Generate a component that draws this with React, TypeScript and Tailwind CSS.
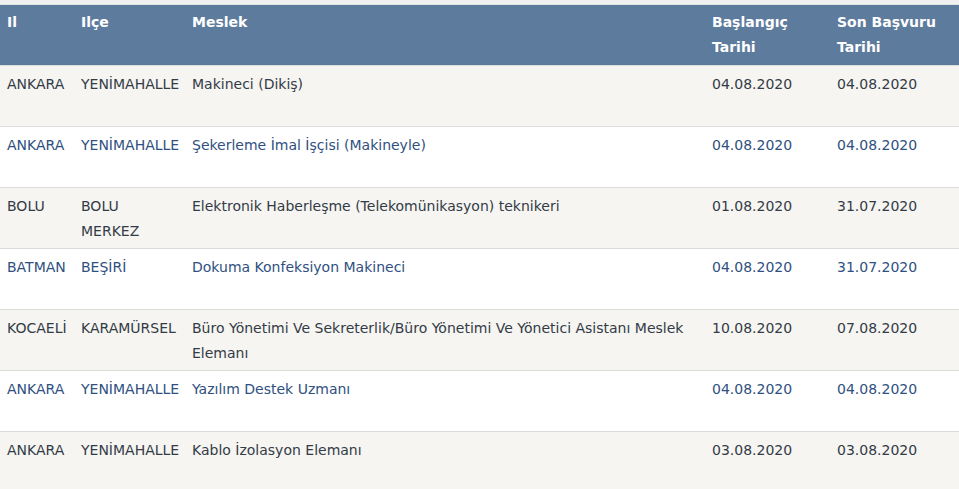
import React from "react";

type Row = {
  il: string;
  ilce: string[];
  meslek: string[];
  baslangic: string;
  son: string;
};

const rows: Row[] = [
  { il: "ANKARA", ilce: ["YENİMAHALLE"], meslek: ["Makineci (Dikiş)"], baslangic: "04.08.2020", son: "04.08.2020" },
  { il: "ANKARA", ilce: ["YENİMAHALLE"], meslek: ["Şekerleme İmal İşçisi (Makineyle)"], baslangic: "04.08.2020", son: "04.08.2020" },
  { il: "BOLU", ilce: ["BOLU", "MERKEZ"], meslek: ["Elektronik Haberleşme (Telekomünikasyon) teknikeri"], baslangic: "01.08.2020", son: "31.07.2020" },
  { il: "BATMAN", ilce: ["BEŞİRİ"], meslek: ["Dokuma Konfeksiyon Makineci"], baslangic: "04.08.2020", son: "31.07.2020" },
  {
    il: "KOCAELİ",
    ilce: ["KARAMÜRSEL"],
    meslek: ["Büro Yönetimi Ve Sekreterlik/Büro Yönetimi Ve Yönetici Asistanı Meslek", "Elemanı"],
    baslangic: "10.08.2020",
    son: "07.08.2020",
  },
  { il: "ANKARA", ilce: ["YENİMAHALLE"], meslek: ["Yazılım Destek Uzmanı"], baslangic: "04.08.2020", son: "04.08.2020" },
  { il: "ANKARA", ilce: ["YENİMAHALLE"], meslek: ["Kablo İzolasyon Elemanı"], baslangic: "03.08.2020", son: "03.08.2020" },
];

const Lines = ({ lines }: { lines: string[] }) => (
  <>
    {lines.map((l, i) => (
      <span key={i} className="block whitespace-nowrap">
        {l}
      </span>
    ))}
  </>
);

export default function App() {
  return (
    <div
      className="w-[959px] h-[489px] overflow-hidden bg-white"
      style={{ fontFamily: "'DejaVu Sans', Verdana, sans-serif" }}
    >
      {/* faint page background strip above the table */}
      <div className="h-[4px] bg-[#f1f1f1] border-b border-[#e2e2e2] box-content" />
      <table className="table-fixed border-collapse w-[980px] text-[14px] leading-[25px]">
        <colgroup>
          <col className="w-[74px]" />
          <col className="w-[111px]" />
          <col className="w-[520px]" />
          <col className="w-[125px]" />
          <col className="w-[150px]" />
        </colgroup>
        <thead>
          <tr className="h-[60px] bg-[#5d7b9d] text-white font-bold align-top">
            <th className="text-left font-bold px-[7px] pt-[5px]">Il</th>
            <th className="text-left font-bold px-[7px] pt-[5px]">Ilçe</th>
            <th className="text-left font-bold px-[7px] pt-[5px]">Meslek</th>
            <th className="text-left font-bold px-[7px] pt-[5px]">
              <Lines lines={["Başlangıç", "Tarihi"]} />
            </th>
            <th className="text-left font-bold px-[7px] pt-[5px]">
              <Lines lines={["Son Başvuru", "Tarihi"]} />
            </th>
          </tr>
        </thead>
        <tbody>
          {rows.map((r, i) => {
            const odd = i % 2 === 0;
            return (
              <tr
                key={i}
                className={`h-[61px] align-top border-t border-[#dcdcdc] ${
                  odd ? "bg-[#f6f5f1] text-[#333b47]" : "bg-white text-[#2f5080]"
                }`}
              >
                <td className="px-[7px] pt-[6px] whitespace-nowrap">{r.il}</td>
                <td className="px-[7px] pt-[6px]">
                  <Lines lines={r.ilce} />
                </td>
                <td className="px-[7px] pt-[6px]">
                  <Lines lines={r.meslek} />
                </td>
                <td className="px-[7px] pt-[6px]">{r.baslangic}</td>
                <td className="px-[7px] pt-[6px]">{r.son}</td>
              </tr>
            );
          })}
        </tbody>
      </table>
    </div>
  );
}
